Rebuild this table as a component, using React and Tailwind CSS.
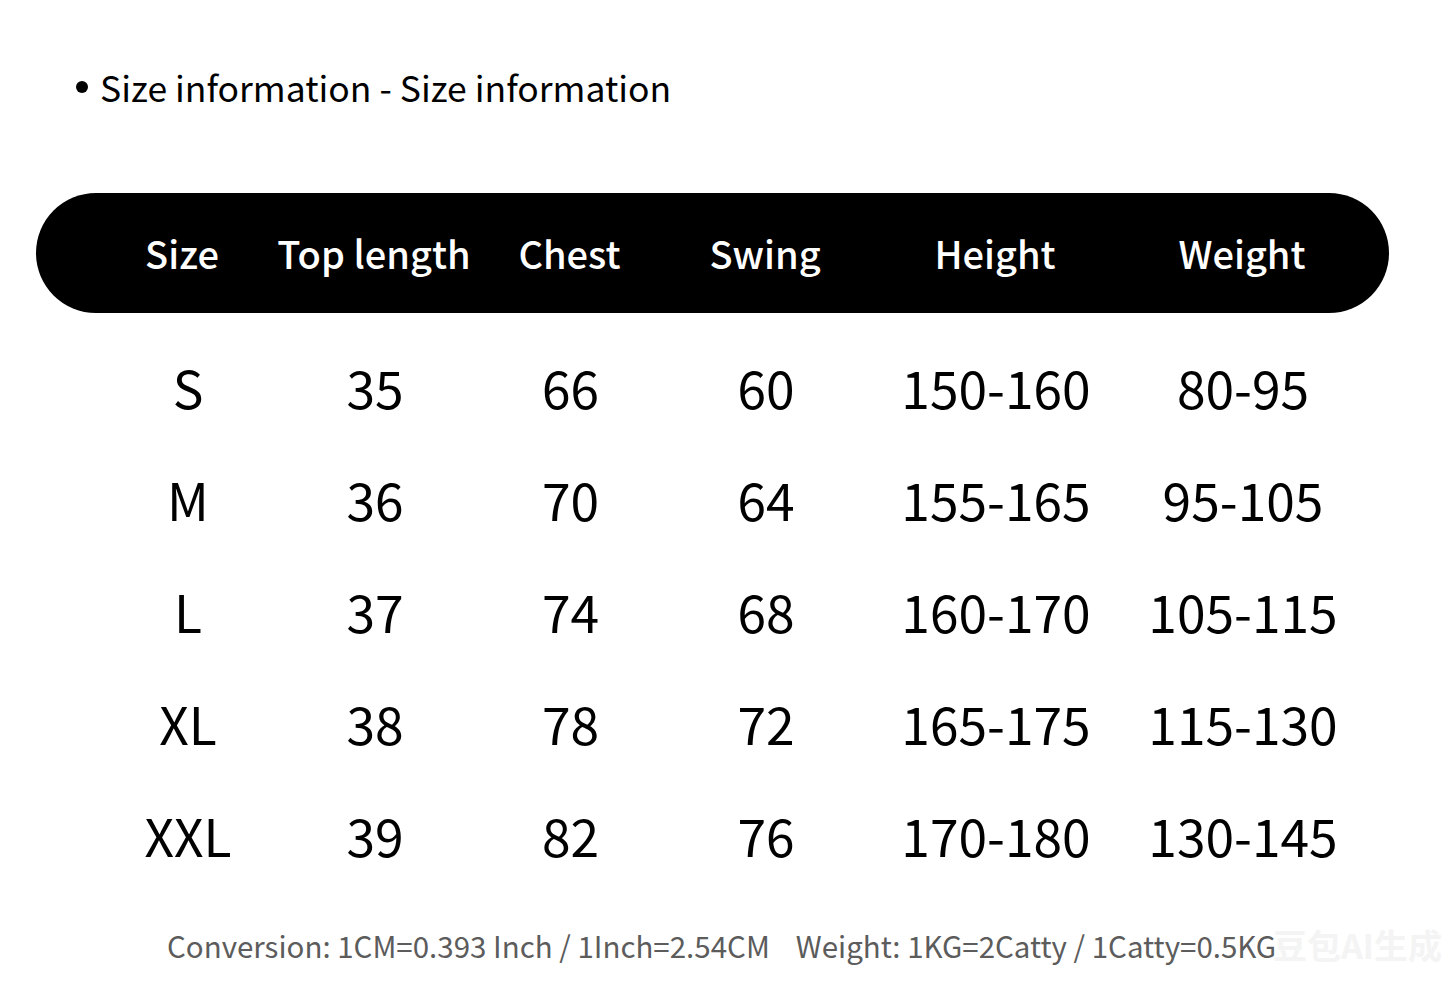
const cols = [
  { w: 'w-[190px]' },
  { w: 'w-[194px]' },
  { w: 'w-[197px]' },
  { w: 'w-[194px]' },
  { w: 'w-[266px]' },
  { w: 'w-[228px]' },
]

const headers = ['Size', 'Top length', 'Chest', 'Swing', 'Height', 'Weight']

const rows = [
  ['S', '35', '66', '60', '150-160', '80-95'],
  ['M', '36', '70', '64', '155-165', '95-105'],
  ['L', '37', '74', '68', '160-170', '105-115'],
  ['XL', '38', '78', '72', '165-175', '115-130'],
  ['XXL', '39', '82', '76', '170-180', '130-145'],
]

export default function App() {
  return (
    <div className="w-[1445px] h-[1001px] bg-white overflow-hidden font-['Noto_Sans_CJK_SC',sans-serif] text-black">
      {/* title */}
      <div className="flex items-center h-[40px] mt-[67px] ml-[76px]">
        <span className="w-[12px] h-[12px] rounded-full bg-black mr-[12px]" />
        <span className="text-[35.5px] leading-none whitespace-nowrap">Size information - Size information</span>
      </div>

      {/* header bar */}
      <div className="ml-[36px] mt-[86px] w-[1353px] h-[120px] rounded-full bg-black flex items-center pl-[51px]">
        {headers.map((h, i) => (
          <div key={h} className={`${cols[i].w} text-center text-white font-medium text-[38px] leading-none whitespace-nowrap`}>
            {h}
          </div>
        ))}
      </div>

      {/* rows */}
      <div className="mt-[18px] pl-[88px]">
        {rows.map(r => (
          <div key={r[0]} className="flex items-center h-[112px]">
            {r.map((v, i) => (
              <div key={i} className={`${cols[i].w} ${i === 0 ? 'pl-[10px]' : ''} text-center text-[51.5px] leading-none`}>
                {v}
              </div>
            ))}
          </div>
        ))}
      </div>

      {/* footer */}
      <div className="relative mt-[35px] ml-[167px] h-[40px] flex items-center text-[29.5px] leading-none text-[#5c5c5c] whitespace-nowrap">
        <span>Conversion: 1CM=0.393 Inch / 1Inch=2.54CM</span>
        <span className="ml-[26px]">Weight: 1KG=2Catty / 1Catty=0.5KG</span>
        <span className="absolute left-[1106px] top-[2px] text-[34px] font-bold text-[#f4f4f4]">豆包AI生成</span>
      </div>
    </div>
  )
}
